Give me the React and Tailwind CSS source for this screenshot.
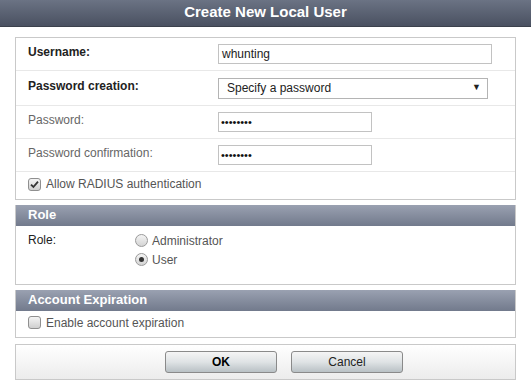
import React from "react";

function Checkbox({ checked }) {
  return (
    <span className="w-[13px] h-[13px] rounded-[3px] border border-[#8f8f8f] bg-gradient-to-b from-[#f4f4f4] to-[#cfcfcf] flex items-center justify-center shrink-0">
      {checked && (
        <svg width="9" height="9" viewBox="0 0 9 9">
          <path d="M1 4.6 L3.4 7 L8 1.6" fill="none" stroke="#333" strokeWidth="1.8" />
        </svg>
      )}
    </span>
  );
}

function Radio({ checked }) {
  return (
    <span className="w-[13px] h-[13px] rounded-full border border-[#9a9a9a] bg-gradient-to-b from-[#f4f4f4] to-[#d4d4d4] flex items-center justify-center shrink-0">
      {checked && <span className="w-[5px] h-[5px] rounded-full bg-[#333]" />}
    </span>
  );
}

function SectionHeader({ title }) {
  return (
    <div className="h-[21px] flex items-center pl-[12px] pb-[2px] bg-gradient-to-b from-[#9aa1b1] to-[#727a8c] text-white text-[13px] font-bold">
      {title}
    </div>
  );
}

export default function App() {
  return (
    <div
      className="w-[531px] h-[390px] bg-white overflow-hidden text-[12px]"
      style={{ fontFamily: '"Liberation Sans", Arial, sans-serif' }}
    >
      {/* title bar */}
      <div className="h-[27px] flex items-center justify-center pb-[1px] bg-gradient-to-b from-[#6b7384] to-[#4a5161] border-b border-[#3c414c] text-white text-[15px] font-bold">
        Create New Local User
      </div>

      <div className="px-[15px] pt-[10px] flex flex-col gap-[5px]">
        {/* user details */}
        <div className="border border-[#c9c9c9] flex flex-col">
          <div className="h-[33px] border-b border-[#e8e8e8] flex items-center pl-[12px]">
            <span className="w-[190px] font-bold text-[#222] -mt-[4px]">Username:</span>
            <div className="w-[274px] h-[20px] border border-[#c2c2c2] flex items-center pl-[3px] text-[#222]">
              whunting
            </div>
          </div>
          <div className="h-[35px] border-b border-[#e8e8e8] flex items-center pl-[12px]">
            <span className="w-[190px] font-bold text-[#222] -mt-[4px]">Password creation:</span>
            <div className="w-[270px] h-[21px] border border-[#b4b4b4] flex items-center justify-between pl-[8px] pr-[6px] text-[#222]">
              <span>Specify a password</span>
              <span className="text-[9px]">▼</span>
            </div>
          </div>
          <div className="h-[33px] border-b border-[#e8e8e8] flex items-center pl-[12px]">
            <span className="w-[190px] text-[#666] -mt-[4px]">Password:</span>
            <div className="w-[154px] h-[20px] border border-[#c2c2c2] flex items-center pl-[2px] text-[11px] text-[#111]">
              ••••••••
            </div>
          </div>
          <div className="h-[33px] border-b border-[#e8e8e8] flex items-center pl-[12px]">
            <span className="w-[190px] text-[#666] -mt-[4px]">Password confirmation:</span>
            <div className="w-[154px] h-[20px] border border-[#c2c2c2] flex items-center pl-[2px] text-[11px] text-[#111]">
              ••••••••
            </div>
          </div>
          <div className="h-[27px] flex items-center pl-[12px] gap-[5px] pb-[3px] text-[#555]">
            <Checkbox checked />
            <span>Allow RADIUS authentication</span>
          </div>
        </div>

        {/* role */}
        <div className="border border-[#c9c9c9] border-t-0">
          <SectionHeader title="Role" />
          <div className="h-[58px] flex pl-[12px] pt-[5px]">
            <span className="w-[107px] text-[#222] leading-[19px]">Role:</span>
            <div className="flex flex-col">
              <label className="h-[19px] flex items-center gap-[4px] text-[#555]">
                <Radio />
                Administrator
              </label>
              <label className="h-[19px] flex items-center gap-[4px] text-[#555]">
                <Radio checked />
                User
              </label>
            </div>
          </div>
        </div>

        {/* account expiration */}
        <div className="border border-[#c9c9c9] border-t-0">
          <SectionHeader title="Account Expiration" />
          <div className="h-[26px] flex items-center pl-[12px] gap-[5px] pb-[3px] text-[#555]">
            <Checkbox />
            <span>Enable account expiration</span>
          </div>
        </div>

        {/* buttons */}
        <div className="h-[36px] border border-[#c9c9c9] mt-[1px] bg-gradient-to-b from-white to-[#ececec] flex items-center justify-center gap-[14px] pl-[37px]">
          <button className="w-[112px] h-[22px] rounded-[3px] border border-[#8a8a8a] bg-gradient-to-b from-[#f5f5f5] via-[#dfe3e5] to-[#b9c1c5] font-bold text-black">
            OK
          </button>
          <button className="w-[112px] h-[22px] rounded-[3px] border border-[#8a8a8a] bg-gradient-to-b from-[#f5f5f5] via-[#dfe3e5] to-[#b9c1c5] text-[#222]">
            Cancel
          </button>
        </div>
      </div>
    </div>
  );
}
